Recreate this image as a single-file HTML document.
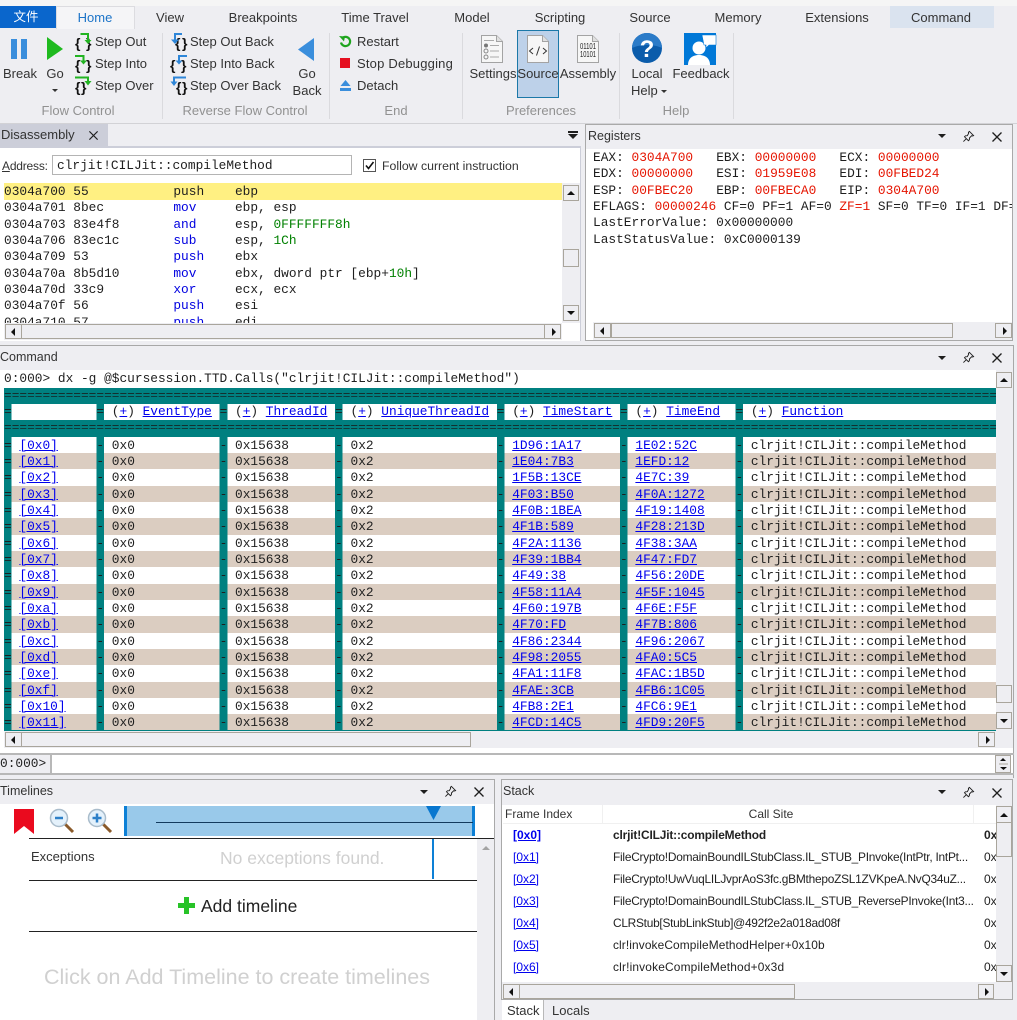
<!DOCTYPE html>
<html><head><meta charset="utf-8"><style>
*{box-sizing:border-box}
html,body{margin:0;padding:0}
body{width:1017px;height:1020px;position:relative;overflow:hidden;background:#eeeef2;font-family:"Liberation Sans","Noto Sans CJK SC",sans-serif;font-size:13px;color:#333}
.a,.t,.c,.box{position:absolute}
.t,.c{white-space:nowrap;line-height:16px;height:16px}
.c{transform:translateX(-50%)}
.g{color:#919191}
svg{position:absolute;overflow:visible}
.m{font-family:"Liberation Mono",monospace;font-size:12.83px;white-space:pre;color:#1e1e1e}
.red{color:#e51400}
.ln{position:absolute;left:0;height:16.33px;line-height:16.33px}
.s{position:absolute;background:#eeeef2}
.b{position:absolute;background:#eeeef2;border:1px solid #a9a59c}
.b:after{content:"";position:absolute;left:50%;top:50%;width:0;height:0}
.u:after{margin:-2px 0 0 -4px;border:4px solid transparent;border-top:0;border-bottom:4px solid #111}
.d:after{margin:-2px 0 0 -4px;border:4px solid transparent;border-bottom:0;border-top:4px solid #111}
.l:after{margin:-4px 0 0 -3px;border:4px solid transparent;border-left:0;border-right:4px solid #111}
.r:after{margin:-4px 0 0 -1px;border:4px solid transparent;border-right:0;border-left:4px solid #111}
#tb{position:absolute;left:4px;top:387.6px;width:992px;height:343px;overflow:hidden;background:#008080}
.w{position:relative;height:16.33px;line-height:16.33px;font-family:"Liberation Mono",monospace;font-size:12.83px;white-space:pre;color:#1e1e1e;
--c:#fff;background:linear-gradient(90deg,#008080 0 7.7px,var(--c) 7.7px 92.4px,#008080 92.4px 100.1px,var(--c) 100.1px 215.6px,#008080 215.6px 223.3px,var(--c) 223.3px 331px,#008080 331px 338.7px,var(--c) 338.7px 492.8px,#008080 492.8px 500.5px,var(--c) 500.5px 616px,#008080 616px 623.7px,var(--c) 623.7px 731.5px,#008080 731.5px 739.2px,var(--c) 739.2px)}
.w:nth-child(even){--c:#dbcdc1}
.w>*{position:absolute;top:1px;font-style:normal;font-weight:normal;text-decoration:none}
.hd .w>*{top:0}
.w>:nth-child(1){left:0}.w>:nth-child(2){left:15.4px}
.w>:nth-child(3){left:92.4px}.w>:nth-child(4){left:107.8px}
.w>:nth-child(5){left:215.6px}.w>:nth-child(6){left:231px}
.w>:nth-child(7){left:331px}.w>:nth-child(8){left:346.5px}
.w>:nth-child(9){left:492.8px}.w>:nth-child(10){left:508.2px}
.w>:nth-child(11){left:616px}.w>:nth-child(12){left:631.4px}
.w>:nth-child(13){left:731.5px}.w>:nth-child(14){left:746.9px}
#tb a,.lk{color:#0000ee;text-decoration:underline}
.eq{height:16.33px;line-height:16.33px;font-family:"Liberation Mono",monospace;font-size:12.83px;white-space:pre;color:#12302f;overflow:hidden;background:#008080}
.hd{position:relative;height:16.33px}
.hd .w{position:absolute;left:0;top:0;width:992px}
.hd .w{--c:#fff}
.st{position:absolute;left:513px;font-size:12px;color:#0000ee;text-decoration:underline;line-height:16px;height:16px}
.sc{position:absolute;left:613px;font-size:11.9px;color:#222;line-height:16px;height:16px;white-space:nowrap;width:360px;overflow:hidden}
.sz{position:absolute;left:984px;font-size:12px;color:#222;line-height:16px;height:16px;width:12px;overflow:hidden}
.txt{position:absolute;font-weight:bold;font-size:14px;line-height:16px;color:#111;white-space:pre;font-family:"Liberation Sans",sans-serif}
</style></head><body>
<svg width="0" height="0" style="position:absolute"><defs>
<symbol id="pin" viewBox="0 0 14 14"><path d="M8 1.5l4.5 4.5-1 .5-1-.4-2.4 2.4-.2 2-1 1-4.2-4.2 1-1 2-.2L7.100 3.700 6.900 2.500zM4.500 9.500L1.500 12.500" fill="none" stroke="#1e1e1e" stroke-width="1"/></symbol>
<symbol id="x" viewBox="0 0 12 12"><path d="M1.500 1.500l9 9M10.500 1.500l-9 9" stroke="#1e1e1e" stroke-width="1.300" fill="none"/></symbol>
<symbol id="doc" viewBox="0 0 22 28"><path d="M.5.5h15l6 6v21H.5z" fill="#f6f6f6" stroke="#a3a3a3"/><path d="M15.500.5v6h6" fill="#e0e0e0" stroke="#a3a3a3"/></symbol>
</defs></svg>

<!-- ribbon top -->
<div class="a" style="left:0;top:0;width:1017px;height:6px;background:#f5f5f5"></div>
<div class="a" style="left:0;top:6px;width:56px;height:22px;background:#0a66cc"></div>
<div class="c" style="left:26px;top:9px;color:#fff;font-size:12.500px">文件</div>
<div class="a" style="left:56px;top:6px;width:79px;height:23px;background:#f5f5f7;border:1px solid #dcdce0;border-bottom:0"></div>
<div class="a" style="left:890px;top:6px;width:104px;height:22px;background:#dae3ef"></div>
<div class="c" style="left:95px;top:10px;color:#1c74c8;font-size:13px">Home</div>
<div class="c" style="left:170px;top:10px">View</div>
<div class="c" style="left:263px;top:10px">Breakpoints</div>
<div class="c" style="left:375px;top:10px">Time Travel</div>
<div class="c" style="left:472px;top:10px">Model</div>
<div class="c" style="left:560px;top:10px">Scripting</div>
<div class="c" style="left:650px;top:10px">Source</div>
<div class="c" style="left:738px;top:10px">Memory</div>
<div class="c" style="left:837px;top:10px">Extensions</div>
<div class="c" style="left:941px;top:10px">Command</div>

<div class="a" style="left:162px;top:33px;width:1px;height:86px;background:#dadade"></div>
<div class="a" style="left:329px;top:33px;width:1px;height:86px;background:#dadade"></div>
<div class="a" style="left:462px;top:33px;width:1px;height:86px;background:#dadade"></div>
<div class="a" style="left:619px;top:33px;width:1px;height:86px;background:#dadade"></div>
<div class="a" style="left:733px;top:33px;width:1px;height:86px;background:#dadade"></div>

<!-- Flow control -->
<div class="a" style="left:11px;top:39px;width:6px;height:20px;background:#3a8edc"></div>
<div class="a" style="left:21px;top:39px;width:6px;height:20px;background:#3a8edc"></div>
<svg style="left:47px;top:37px" width="17" height="24"><path d="M0 0L16 12 0 23z" fill="#1fba1f"/></svg>
<div class="c" style="left:20px;top:66px">Break</div>
<div class="c" style="left:55px;top:66px">Go</div>
<svg style="left:52px;top:89px" width="7" height="4"><path d="M0 0h6l-3 3z" fill="#333"/></svg>

<div class="txt" style="left:75px;top:35px;letter-spacing:5.500px">{}</div>
<svg style="left:75px;top:33px" width="18" height="18"><path d="M5.500 1h7.500V8" fill="none" stroke="#22b422" stroke-width="2"/><path d="M9.500 7h7L13 11z" fill="#22b422"/></svg>
<div class="txt" style="left:75px;top:57px;letter-spacing:5.500px">{}</div>
<svg style="left:75px;top:55px" width="18" height="18"><path d="M0 1h8.500V6" fill="none" stroke="#22b422" stroke-width="2"/><path d="M5 5.500h7L8.500 9.500z" fill="#22b422"/></svg>
<div class="txt" style="left:75px;top:79px;letter-spacing:.5px">{}</div>
<svg style="left:75px;top:76px" width="18" height="18"><path d="M0 1.500h13V6" fill="none" stroke="#22b422" stroke-width="2"/><path d="M9.500 5h7L13 9.500z" fill="#22b422"/></svg>
<div class="t" style="left:95px;top:34px">Step Out</div>
<div class="t" style="left:95px;top:56px">Step Into</div>
<div class="t" style="left:95px;top:78px">Step Over</div>
<div class="c g" style="left:78px;top:103px">Flow Control</div>

<!-- Reverse -->
<div class="txt" style="left:175px;top:35px;letter-spacing:1.500px">{}</div>
<svg style="left:170px;top:33px" width="18" height="18"><path d="M12 1H5V7" fill="none" stroke="#2e86d8" stroke-width="2"/><path d="M1 6.500h8L5 11z" fill="#2e86d8"/></svg>
<div class="txt" style="left:170px;top:57px;letter-spacing:5.500px">{}</div>
<svg style="left:170px;top:55px" width="18" height="18"><path d="M17 1H9V6" fill="none" stroke="#2e86d8" stroke-width="2"/><path d="M5.500 5.500h7L9 9.500z" fill="#2e86d8"/></svg>
<div class="txt" style="left:176px;top:79px;letter-spacing:.5px">{}</div>
<svg style="left:170px;top:76px" width="18" height="18"><path d="M16 1.500H4V6" fill="none" stroke="#2e86d8" stroke-width="2"/><path d="M.5 5.500h7L4 10z" fill="#2e86d8"/></svg>
<div class="t" style="left:190px;top:34px">Step Out Back</div>
<div class="t" style="left:190px;top:56px">Step Into Back</div>
<div class="t" style="left:190px;top:78px">Step Over Back</div>
<svg style="left:298px;top:38px" width="17" height="23"><path d="M16 0L0 11.500 16 23z" fill="#3a8edc"/></svg>
<div class="c" style="left:307px;top:66px">Go</div>
<div class="c" style="left:307px;top:83px">Back</div>
<div class="c g" style="left:245px;top:103px">Reverse Flow Control</div>

<!-- End -->
<svg style="left:339px;top:35px" width="13" height="13"><path d="M3 3.500A4.600 4.600 0 1 1 2 7.500" fill="none" stroke="#1fa51f" stroke-width="2.200"/><path d="M0 1l6 .5-1 5z" fill="#1fa51f"/></svg>
<div class="a" style="left:340px;top:58px;width:10px;height:10px;background:#e51020"></div>
<svg style="left:340px;top:80px" width="11" height="11"><path d="M5.500 0L10.500 6H.5z" fill="#3a8edc"/><rect y="8" width="11" height="3" fill="#3a8edc"/></svg>
<div class="t" style="left:357px;top:34px">Restart</div>
<div class="t" style="left:357px;top:56px;letter-spacing:.2px">Stop Debugging</div>
<div class="t" style="left:357px;top:78px">Detach</div>
<div class="c g" style="left:396px;top:103px">End</div>

<!-- Preferences -->
<div class="a" style="left:517px;top:30px;width:42px;height:68px;background:#bdd1e9;border:1px solid #1b78a8"></div>
<svg style="left:481px;top:35px" width="22" height="28"><use href="#doc"/><circle cx="5" cy="10.500" r="2" fill="#777"/><circle cx="5" cy="16" r="2" fill="none" stroke="#888"/><circle cx="5" cy="22" r="2" fill="none" stroke="#888"/><path d="M9 10.500h9M9 16h9M9 22h9M3 5.500h10" stroke="#aaa"/></svg>
<svg style="left:527px;top:35px" width="22" height="28"><use href="#doc"/><path d="M6 13l-3.500 3L6 19M16 13l3.500 3-3.500 3M12.500 11.500l-3 9" fill="none" stroke="#333"/></svg>
<svg style="left:577px;top:35px" width="22" height="28"><use href="#doc"/><text x="3" y="14" font-family="Liberation Sans" font-size="8.500" fill="#222" textLength="16" lengthAdjust="spacingAndGlyphs">01101</text><text x="3" y="22" font-family="Liberation Sans" font-size="8.500" fill="#222" textLength="16" lengthAdjust="spacingAndGlyphs">10101</text></svg>
<div class="c" style="left:493px;top:66px">Settings</div>
<div class="c" style="left:538px;top:66px">Source</div>
<div class="c" style="left:588px;top:66px">Assembly</div>
<div class="c g" style="left:541px;top:103px">Preferences</div>

<!-- Help -->
<svg style="left:632px;top:33px" width="30" height="30"><circle cx="15" cy="15" r="15" fill="#0b5cab"/><path d="M0 15A15 15 0 0 1 30 15C22 11 8 11 0 15z" fill="#2b7bc8"/><text x="15" y="24" text-anchor="middle" font-family="Liberation Sans" font-weight="bold" font-size="24" fill="#fff">?</text></svg>
<div class="c" style="left:647px;top:66px">Local</div>
<div class="t" style="left:631px;top:83px">Help</div>
<svg style="left:661px;top:90px" width="7" height="4"><path d="M0 0h6l-3 3z" fill="#333"/></svg>
<svg style="left:684px;top:33px" width="32" height="32"><rect width="32" height="32" fill="#0078d7"/><circle cx="15" cy="15" r="6.500" fill="#fff"/><path d="M4 32c0-7 5-10 11-10s11 3 11 10z" fill="#fff"/><path d="M18 2h14v10h-7l-3 3v-3h-2z" fill="#fff" stroke="#0078d7" stroke-width=".6"/></svg>
<div class="c" style="left:701px;top:66px">Feedback</div>
<div class="c g" style="left:676px;top:103px">Help</div>

<div class="a" style="left:0;top:122.500px;width:1017px;height:1px;background:#d2d2d6"></div>

<!-- Disassembly -->
<div class="a" style="left:0;top:124px;width:108px;height:22px;background:#ccced9"></div>
<div class="t" style="left:1px;top:127px">Disassembly</div>
<svg style="left:88px;top:130px" width="11" height="11"><use href="#x"/></svg>
<div class="a" style="left:0;top:146px;width:581px;height:2px;background:#ccced9"></div>
<div class="a" style="left:568px;top:131px;width:10px;height:2px;background:#1e1e1e"></div>
<svg style="left:568px;top:134px" width="10" height="6"><path d="M0 0h10L5 5z" fill="#1e1e1e"/></svg>
<div class="a" style="left:0;top:148px;width:580px;height:193px;background:#fff"></div>
<div class="a" style="left:580px;top:146px;width:1px;height:195px;background:#ccced9"></div>
<div class="t" style="left:2px;top:158px;font-size:12px;letter-spacing:-.2px"><u>A</u>ddress:</div>
<div class="a m" style="left:52px;top:155px;width:300px;height:20px;background:#fff;border:1px solid #b4b4b4;line-height:20px;padding-left:4px">clrjit!CILJit::compileMethod</div>
<div class="a" style="left:363px;top:159px;width:13px;height:13px;background:#fff;border:1px solid #555"></div>
<svg style="left:364px;top:160px" width="11" height="11"><path d="M2 5.500l2.500 3 5-6.500" fill="none" stroke="#111" stroke-width="1.600"/></svg>
<div class="t" style="left:382px;top:158px;font-size:12.300px">Follow current instruction</div>

<div class="a" style="left:4px;top:183px;width:558px;height:17px;background:#fff082"></div>
<div class="a m" style="left:4px;top:184px;width:558px;height:139px;overflow:hidden">
<div class="ln" style="top:0">0304a700 55           push    ebp</div>
<div class="ln" style="top:16.330px">0304a701 8bec         <span style="color:#0000e0">mov</span>     ebp, esp</div>
<div class="ln" style="top:32.660px">0304a703 83e4f8       <span style="color:#0000e0">and</span>     esp, <span style="color:#008000">0FFFFFFF8h</span></div>
<div class="ln" style="top:48.990px">0304a706 83ec1c       <span style="color:#0000e0">sub</span>     esp, <span style="color:#008000">1Ch</span></div>
<div class="ln" style="top:65.320px">0304a709 53           <span style="color:#0000e0">push</span>    ebx</div>
<div class="ln" style="top:81.650px">0304a70a 8b5d10       <span style="color:#0000e0">mov</span>     ebx, dword ptr [ebp+<span style="color:#008000">10h</span>]</div>
<div class="ln" style="top:97.980px">0304a70d 33c9         <span style="color:#0000e0">xor</span>     ecx, ecx</div>
<div class="ln" style="top:114.310px">0304a70f 56           <span style="color:#0000e0">push</span>    esi</div>
<div class="ln" style="top:130.640px">0304a710 57           <span style="color:#0000e0">push</span>    edi</div>
</div>
<div class="s" style="left:562px;top:183px;width:18px;height:140px"></div>
<div class="b u" style="left:563px;top:185px;width:16px;height:16px"></div>
<div class="b" style="left:563px;top:249px;width:16px;height:18px"></div>
<div class="b d" style="left:563px;top:305px;width:16px;height:16px"></div>
<div class="s" style="left:4px;top:323px;width:558px;height:17px"></div>
<div class="b l" style="left:5px;top:324px;width:17px;height:15px"></div>
<div class="b" style="left:21px;top:324px;width:524px;height:15px"></div>
<div class="b r" style="left:544px;top:324px;width:17px;height:15px"></div>

<!-- Registers -->
<div class="a" style="left:585px;top:124px;width:428px;height:217px;background:#fff;border:1px solid #a9a9a9"></div>
<div class="a" style="left:586px;top:125px;width:426px;height:24px;background:#eeeef2"></div>
<div class="t" style="left:588px;top:128px;font-size:12.500px">Registers</div>
<svg style="left:938px;top:134px" width="9" height="5"><path d="M0 0h8L4 4z" fill="#1e1e1e"/></svg>
<svg style="left:962px;top:130px" width="13" height="13"><use href="#pin"/></svg>
<svg style="left:991px;top:131px" width="12" height="12"><use href="#x"/></svg>
<div class="a m" style="left:593px;top:150px;width:419px;height:100px;overflow:hidden">
<div class="ln" style="top:0">EAX: <span class="red">0304A700</span>   EBX: <span class="red">00000000</span>   ECX: <span class="red">00000000</span></div>
<div class="ln" style="top:16.330px">EDX: <span class="red">00000000</span>   ESI: <span class="red">01959E08</span>   EDI: <span class="red">00FBED24</span></div>
<div class="ln" style="top:32.660px">ESP: <span class="red">00FBEC20</span>   EBP: <span class="red">00FBECA0</span>   EIP: <span class="red">0304A700</span></div>
<div class="ln" style="top:48.990px">EFLAGS: <span class="red">00000246</span> CF=0 PF=1 AF=0 <span class="red">ZF=1</span> SF=0 TF=0 IF=1 DF=0</div>
<div class="ln" style="top:65.320px">LastErrorValue: 0x00000000</div>
<div class="ln" style="top:81.650px">LastStatusValue: 0xC0000139</div>
</div>
<div class="s" style="left:593px;top:322px;width:419px;height:18px"></div>
<div class="b l" style="left:594px;top:323px;width:17px;height:15px"></div>
<div class="b" style="left:611px;top:323px;width:342px;height:15px"></div>
<div class="b r" style="left:995px;top:323px;width:17px;height:15px"></div>

<!-- Command -->
<div class="a" style="left:0;top:344.500px;width:1014px;height:1.500px;background:#a8a8a8"></div>
<div class="a" style="left:1013px;top:345px;width:1px;height:433px;background:#a8a8a8"></div>
<div class="t" style="left:0;top:349px;font-size:12.500px">Command</div>
<svg style="left:938px;top:356px" width="9" height="5"><path d="M0 0h8L4 4z" fill="#1e1e1e"/></svg>
<svg style="left:962px;top:351px" width="13" height="13"><use href="#pin"/></svg>
<svg style="left:991px;top:352px" width="12" height="12"><use href="#x"/></svg>
<div class="a" style="left:0;top:370px;width:1013px;height:385px;background:#fff"></div>
<div class="a m" style="left:4px;top:370px;line-height:17px;height:17px">0:000&gt; dx -g @$cursession.TTD.Calls("clrjit!CILJit::compileMethod")</div>
<div id="tb">
<div class="eq">================================================================================================================================================</div>
<div class="hd"><div class="w"><i>=</i><b></b><i>=</i><b>(<a>+</a>)</b><i>=</i><b>(<a>+</a>)</b><i>=</i><b>(<a>+</a>)</b><i>=</i><b>(<a>+</a>)</b><i>=</i><b>(<a>+</a>)</b><i>=</i><b>(<a>+</a>)</b></div>
<a class="lk" style="position:absolute;left:138.600px;top:0;line-height:16.330px;font-family:Liberation Mono;font-size:12.830px">EventType</a>
<a class="lk" style="position:absolute;left:261.800px;top:0;line-height:16.330px;font-family:Liberation Mono;font-size:12.830px">ThreadId</a>
<a class="lk" style="position:absolute;left:377.300px;top:0;line-height:16.330px;font-family:Liberation Mono;font-size:12.830px">UniqueThreadId</a>
<a class="lk" style="position:absolute;left:539px;top:0;line-height:16.330px;font-family:Liberation Mono;font-size:12.830px">TimeStart</a>
<a class="lk" style="position:absolute;left:662.200px;top:0;line-height:16.330px;font-family:Liberation Mono;font-size:12.830px">TimeEnd</a>
<a class="lk" style="position:absolute;left:777.700px;top:0;line-height:16.330px;font-family:Liberation Mono;font-size:12.830px">Function</a>
</div>
<div class="eq">================================================================================================================================================</div>
<div>
<div class="w"><i>=</i><a>[0x0]</a><i>-</i><b>0x0</b><i>-</i><b>0x15638</b><i>-</i><b>0x2</b><i>-</i><a>1D96:1A17</a><i>-</i><a>1E02:52C</a><i>-</i><b>clrjit!CILJit::compileMethod</b></div>
<div class="w"><i>=</i><a>[0x1]</a><i>-</i><b>0x0</b><i>-</i><b>0x15638</b><i>-</i><b>0x2</b><i>-</i><a>1E04:7B3</a><i>-</i><a>1EFD:12</a><i>-</i><b>clrjit!CILJit::compileMethod</b></div>
<div class="w"><i>=</i><a>[0x2]</a><i>-</i><b>0x0</b><i>-</i><b>0x15638</b><i>-</i><b>0x2</b><i>-</i><a>1F5B:13CE</a><i>-</i><a>4E7C:39</a><i>-</i><b>clrjit!CILJit::compileMethod</b></div>
<div class="w"><i>=</i><a>[0x3]</a><i>-</i><b>0x0</b><i>-</i><b>0x15638</b><i>-</i><b>0x2</b><i>-</i><a>4F03:B50</a><i>-</i><a>4F0A:1272</a><i>-</i><b>clrjit!CILJit::compileMethod</b></div>
<div class="w"><i>=</i><a>[0x4]</a><i>-</i><b>0x0</b><i>-</i><b>0x15638</b><i>-</i><b>0x2</b><i>-</i><a>4F0B:1BEA</a><i>-</i><a>4F19:1408</a><i>-</i><b>clrjit!CILJit::compileMethod</b></div>
<div class="w"><i>=</i><a>[0x5]</a><i>-</i><b>0x0</b><i>-</i><b>0x15638</b><i>-</i><b>0x2</b><i>-</i><a>4F1B:589</a><i>-</i><a>4F28:213D</a><i>-</i><b>clrjit!CILJit::compileMethod</b></div>
<div class="w"><i>=</i><a>[0x6]</a><i>-</i><b>0x0</b><i>-</i><b>0x15638</b><i>-</i><b>0x2</b><i>-</i><a>4F2A:1136</a><i>-</i><a>4F38:3AA</a><i>-</i><b>clrjit!CILJit::compileMethod</b></div>
<div class="w"><i>=</i><a>[0x7]</a><i>-</i><b>0x0</b><i>-</i><b>0x15638</b><i>-</i><b>0x2</b><i>-</i><a>4F39:1BB4</a><i>-</i><a>4F47:FD7</a><i>-</i><b>clrjit!CILJit::compileMethod</b></div>
<div class="w"><i>=</i><a>[0x8]</a><i>-</i><b>0x0</b><i>-</i><b>0x15638</b><i>-</i><b>0x2</b><i>-</i><a>4F49:38</a><i>-</i><a>4F56:20DE</a><i>-</i><b>clrjit!CILJit::compileMethod</b></div>
<div class="w"><i>=</i><a>[0x9]</a><i>-</i><b>0x0</b><i>-</i><b>0x15638</b><i>-</i><b>0x2</b><i>-</i><a>4F58:11A4</a><i>-</i><a>4F5F:1045</a><i>-</i><b>clrjit!CILJit::compileMethod</b></div>
<div class="w"><i>=</i><a>[0xa]</a><i>-</i><b>0x0</b><i>-</i><b>0x15638</b><i>-</i><b>0x2</b><i>-</i><a>4F60:197B</a><i>-</i><a>4F6E:F5F</a><i>-</i><b>clrjit!CILJit::compileMethod</b></div>
<div class="w"><i>=</i><a>[0xb]</a><i>-</i><b>0x0</b><i>-</i><b>0x15638</b><i>-</i><b>0x2</b><i>-</i><a>4F70:FD</a><i>-</i><a>4F7B:806</a><i>-</i><b>clrjit!CILJit::compileMethod</b></div>
<div class="w"><i>=</i><a>[0xc]</a><i>-</i><b>0x0</b><i>-</i><b>0x15638</b><i>-</i><b>0x2</b><i>-</i><a>4F86:2344</a><i>-</i><a>4F96:2067</a><i>-</i><b>clrjit!CILJit::compileMethod</b></div>
<div class="w"><i>=</i><a>[0xd]</a><i>-</i><b>0x0</b><i>-</i><b>0x15638</b><i>-</i><b>0x2</b><i>-</i><a>4F98:2055</a><i>-</i><a>4FA0:5C5</a><i>-</i><b>clrjit!CILJit::compileMethod</b></div>
<div class="w"><i>=</i><a>[0xe]</a><i>-</i><b>0x0</b><i>-</i><b>0x15638</b><i>-</i><b>0x2</b><i>-</i><a>4FA1:11F8</a><i>-</i><a>4FAC:1B5D</a><i>-</i><b>clrjit!CILJit::compileMethod</b></div>
<div class="w"><i>=</i><a>[0xf]</a><i>-</i><b>0x0</b><i>-</i><b>0x15638</b><i>-</i><b>0x2</b><i>-</i><a>4FAE:3CB</a><i>-</i><a>4FB6:1C05</a><i>-</i><b>clrjit!CILJit::compileMethod</b></div>
<div class="w"><i>=</i><a>[0x10]</a><i>-</i><b>0x0</b><i>-</i><b>0x15638</b><i>-</i><b>0x2</b><i>-</i><a>4FB8:2E1</a><i>-</i><a>4FC6:9E1</a><i>-</i><b>clrjit!CILJit::compileMethod</b></div>
<div class="w"><i>=</i><a>[0x11]</a><i>-</i><b>0x0</b><i>-</i><b>0x15638</b><i>-</i><b>0x2</b><i>-</i><a>4FCD:14C5</a><i>-</i><a>4FD9:20F5</a><i>-</i><b>clrjit!CILJit::compileMethod</b></div>
</div>
</div>
<div class="s" style="left:996px;top:370px;width:17px;height:378px"></div>
<div class="b u" style="left:996px;top:372px;width:16px;height:16px"></div>
<div class="b" style="left:996px;top:685px;width:16px;height:18px"></div>
<div class="b d" style="left:996px;top:712px;width:16px;height:17px"></div>
<div class="s" style="left:4px;top:731px;width:992px;height:17px"></div>
<div class="b l" style="left:5px;top:732px;width:17px;height:15px"></div>
<div class="b" style="left:21px;top:732px;width:450px;height:15px"></div>
<div class="b r" style="left:978px;top:732px;width:17px;height:15px"></div>
<!-- prompt -->
<div class="a" style="left:0;top:753px;width:1014px;height:2px;background:#b8b8b8"></div>
<div class="a" style="left:0;top:755px;width:50px;height:18px;background:#eeeef2"></div>
<div class="a" style="left:50px;top:755px;width:2px;height:18px;background:#b8b8b8"></div>
<div class="a m" style="left:0;top:755px;line-height:18px;height:18px">0:000&gt;</div>
<div class="a" style="left:52px;top:755px;width:961px;height:18px;background:#fff"></div>
<div class="a" style="left:0;top:773px;width:1014px;height:2px;background:#b8b8b8"></div>
<div class="b" style="left:995px;top:755px;width:16px;height:18px"></div>
<svg style="left:999px;top:757px" width="9" height="15"><path d="M4 1l3 3H1z" fill="#111"/><path d="M1 10h7l-3.500 3z" fill="#111"/><path d="M0 7h9" stroke="#a9a59c"/></svg>

<!-- Timelines -->
<div class="a" style="left:0;top:779px;width:495px;height:241px;background:#fff;border-top:1px solid #a9a9a9;border-right:1px solid #a9a9a9"></div>
<div class="a" style="left:0;top:780px;width:494px;height:24px;background:#eeeef2"></div>
<div class="t" style="left:0;top:783px;font-size:12.500px">Timelines</div>
<svg style="left:420px;top:790px" width="9" height="5"><path d="M0 0h8L4 4z" fill="#1e1e1e"/></svg>
<svg style="left:444px;top:785px" width="13" height="13"><use href="#pin"/></svg>
<svg style="left:473px;top:786px" width="12" height="12"><use href="#x"/></svg>
<svg style="left:14px;top:809px" width="20" height="25"><path d="M0 0h20v25L10 17 0 25z" fill="#ea0a1e"/></svg>
<svg style="left:49px;top:808px" width="27" height="27"><path d="M15 15l9 9" stroke="#8a5a2a" stroke-width="3"/><circle cx="10" cy="10" r="8.500" fill="#e4f1fb" stroke="#a9bccb" stroke-width="1.500"/><path d="M6 10h8" stroke="#2d80c8" stroke-width="2.500"/></svg>
<svg style="left:87px;top:808px" width="27" height="27"><path d="M15 15l9 9" stroke="#8a5a2a" stroke-width="3"/><circle cx="10" cy="10" r="8.500" fill="#e4f1fb" stroke="#a9bccb" stroke-width="1.500"/><path d="M5.500 10h9M10 5.500v9" stroke="#2d80c8" stroke-width="2.500"/></svg>
<div class="a" style="left:124px;top:806px;width:351px;height:30px;background:#99c9ea;border-left:3px solid #0d80d6;border-right:3px solid #0d80d6"></div>
<div class="a" style="left:156px;top:822px;width:317px;height:1px;background:#123a5e"></div>
<svg style="left:426px;top:806px" width="15" height="15"><path d="M0 0h15L7.500 14z" fill="#0877cf"/></svg>
<div class="a" style="left:29px;top:838px;width:465px;height:1px;background:#222"></div>
<div class="t" style="left:31px;top:849px">Exceptions</div>
<div class="t" style="left:220px;top:848px;font-size:17.500px;line-height:20px;height:20px;color:#d0d0d0">No exceptions found.</div>
<div class="a" style="left:432px;top:839px;width:2px;height:40px;background:#0d80d6"></div>
<div class="a" style="left:29px;top:880px;width:448px;height:1px;background:#222"></div>
<div class="s" style="left:477px;top:839px;width:17px;height:181px"></div>
<svg style="left:482px;top:846px" width="9" height="5"><path d="M4 0l4 4H0z" fill="#a3a3a3"/></svg>
<svg style="left:178px;top:897px" width="17" height="17"><path d="M6 0h5v6h6v5h-6v6H6v-6H0V6h6z" fill="#28c328"/></svg>
<div class="t" style="left:201px;top:896px;font-size:17.500px;line-height:20px;height:20px;color:#222">Add timeline</div>
<div class="a" style="left:29px;top:931px;width:448px;height:1px;background:#222"></div>
<div class="t" style="left:44px;top:965px;font-size:21.500px;line-height:24px;height:24px;color:#d0d0d0">Click on Add Timeline to create timelines</div>

<!-- Stack -->
<div class="a" style="left:501px;top:779px;width:512px;height:221px;background:#fff;border:1px solid #a9a9a9"></div>
<div class="a" style="left:502px;top:780px;width:510px;height:25px;background:#eeeef2"></div>
<div class="t" style="left:503px;top:783px;font-size:12.500px">Stack</div>
<svg style="left:938px;top:790px" width="9" height="5"><path d="M0 0h8L4 4z" fill="#1e1e1e"/></svg>
<svg style="left:962px;top:786px" width="13" height="13"><use href="#pin"/></svg>
<svg style="left:991px;top:787px" width="12" height="12"><use href="#x"/></svg>
<div class="a" style="left:503px;top:823px;width:493px;height:1px;background:#f0f0f0"></div>
<div class="a" style="left:602px;top:805px;width:1px;height:18px;background:#f0f0f0"></div>
<div class="a" style="left:973px;top:805px;width:1px;height:18px;background:#f0f0f0"></div>
<div class="t" style="left:505px;top:806px;font-size:12px">Frame Index</div>
<div class="c" style="left:771px;top:806px;font-size:12px">Call Site</div>
<div class="st" style="top:827px;font-weight:bold">[0x0]</div>
<div class="st" style="top:849px">[0x1]</div>
<div class="st" style="top:871px">[0x2]</div>
<div class="st" style="top:893px">[0x3]</div>
<div class="st" style="top:915px">[0x4]</div>
<div class="st" style="top:937px">[0x5]</div>
<div class="st" style="top:959px">[0x6]</div>
<div class="sc" style="top:827px;font-weight:bold;letter-spacing:-.15px">clrjit!CILJit::compileMethod</div>
<div class="sc" style="top:849px;letter-spacing:-.24px">FileCrypto!DomainBoundILStubClass.IL_STUB_PInvoke(IntPtr, IntPt...</div>
<div class="sc" style="top:871px;letter-spacing:-.24px">FileCrypto!UwVuqLILJvprAoS3fc.gBMthepoZSL1ZVKpeA.NvQ34uZ...</div>
<div class="sc" style="top:893px;letter-spacing:-.24px">FileCrypto!DomainBoundILStubClass.IL_STUB_ReversePInvoke(Int3...</div>
<div class="sc" style="top:915px;letter-spacing:-.26px">CLRStub[StubLinkStub]@492f2e2a018ad08f</div>
<div class="sc" style="top:937px;letter-spacing:.11px">clr!invokeCompileMethodHelper+0x10b</div>
<div class="sc" style="top:959px;letter-spacing:.18px">clr!invokeCompileMethod+0x3d</div>
<div class="sz" style="top:827px;font-weight:bold">0x</div>
<div class="sz" style="top:849px">0x</div>
<div class="sz" style="top:871px">0x</div>
<div class="sz" style="top:893px">0x</div>
<div class="sz" style="top:915px">0x</div>
<div class="sz" style="top:937px">0x</div>
<div class="sz" style="top:959px">0x</div>
<div class="s" style="left:996px;top:805px;width:16px;height:177px"></div>
<div class="b u" style="left:996px;top:806px;width:16px;height:17px"></div>
<div class="b" style="left:996px;top:822px;width:16px;height:35px"></div>
<div class="b d" style="left:996px;top:965px;width:16px;height:17px"></div>
<div class="s" style="left:502px;top:982px;width:510px;height:17px"></div>
<div class="b l" style="left:503px;top:984px;width:17px;height:15px"></div>
<div class="b" style="left:519px;top:984px;width:276px;height:15px"></div>
<div class="b r" style="left:978px;top:984px;width:16px;height:15px"></div>
<div class="a" style="left:502px;top:1000px;width:42px;height:20px;background:#fff;border-right:1px solid #b8b8b8"></div>
<div class="t" style="left:507px;top:1003px">Stack</div>
<div class="t" style="left:552px;top:1003px">Locals</div>
</body></html>
